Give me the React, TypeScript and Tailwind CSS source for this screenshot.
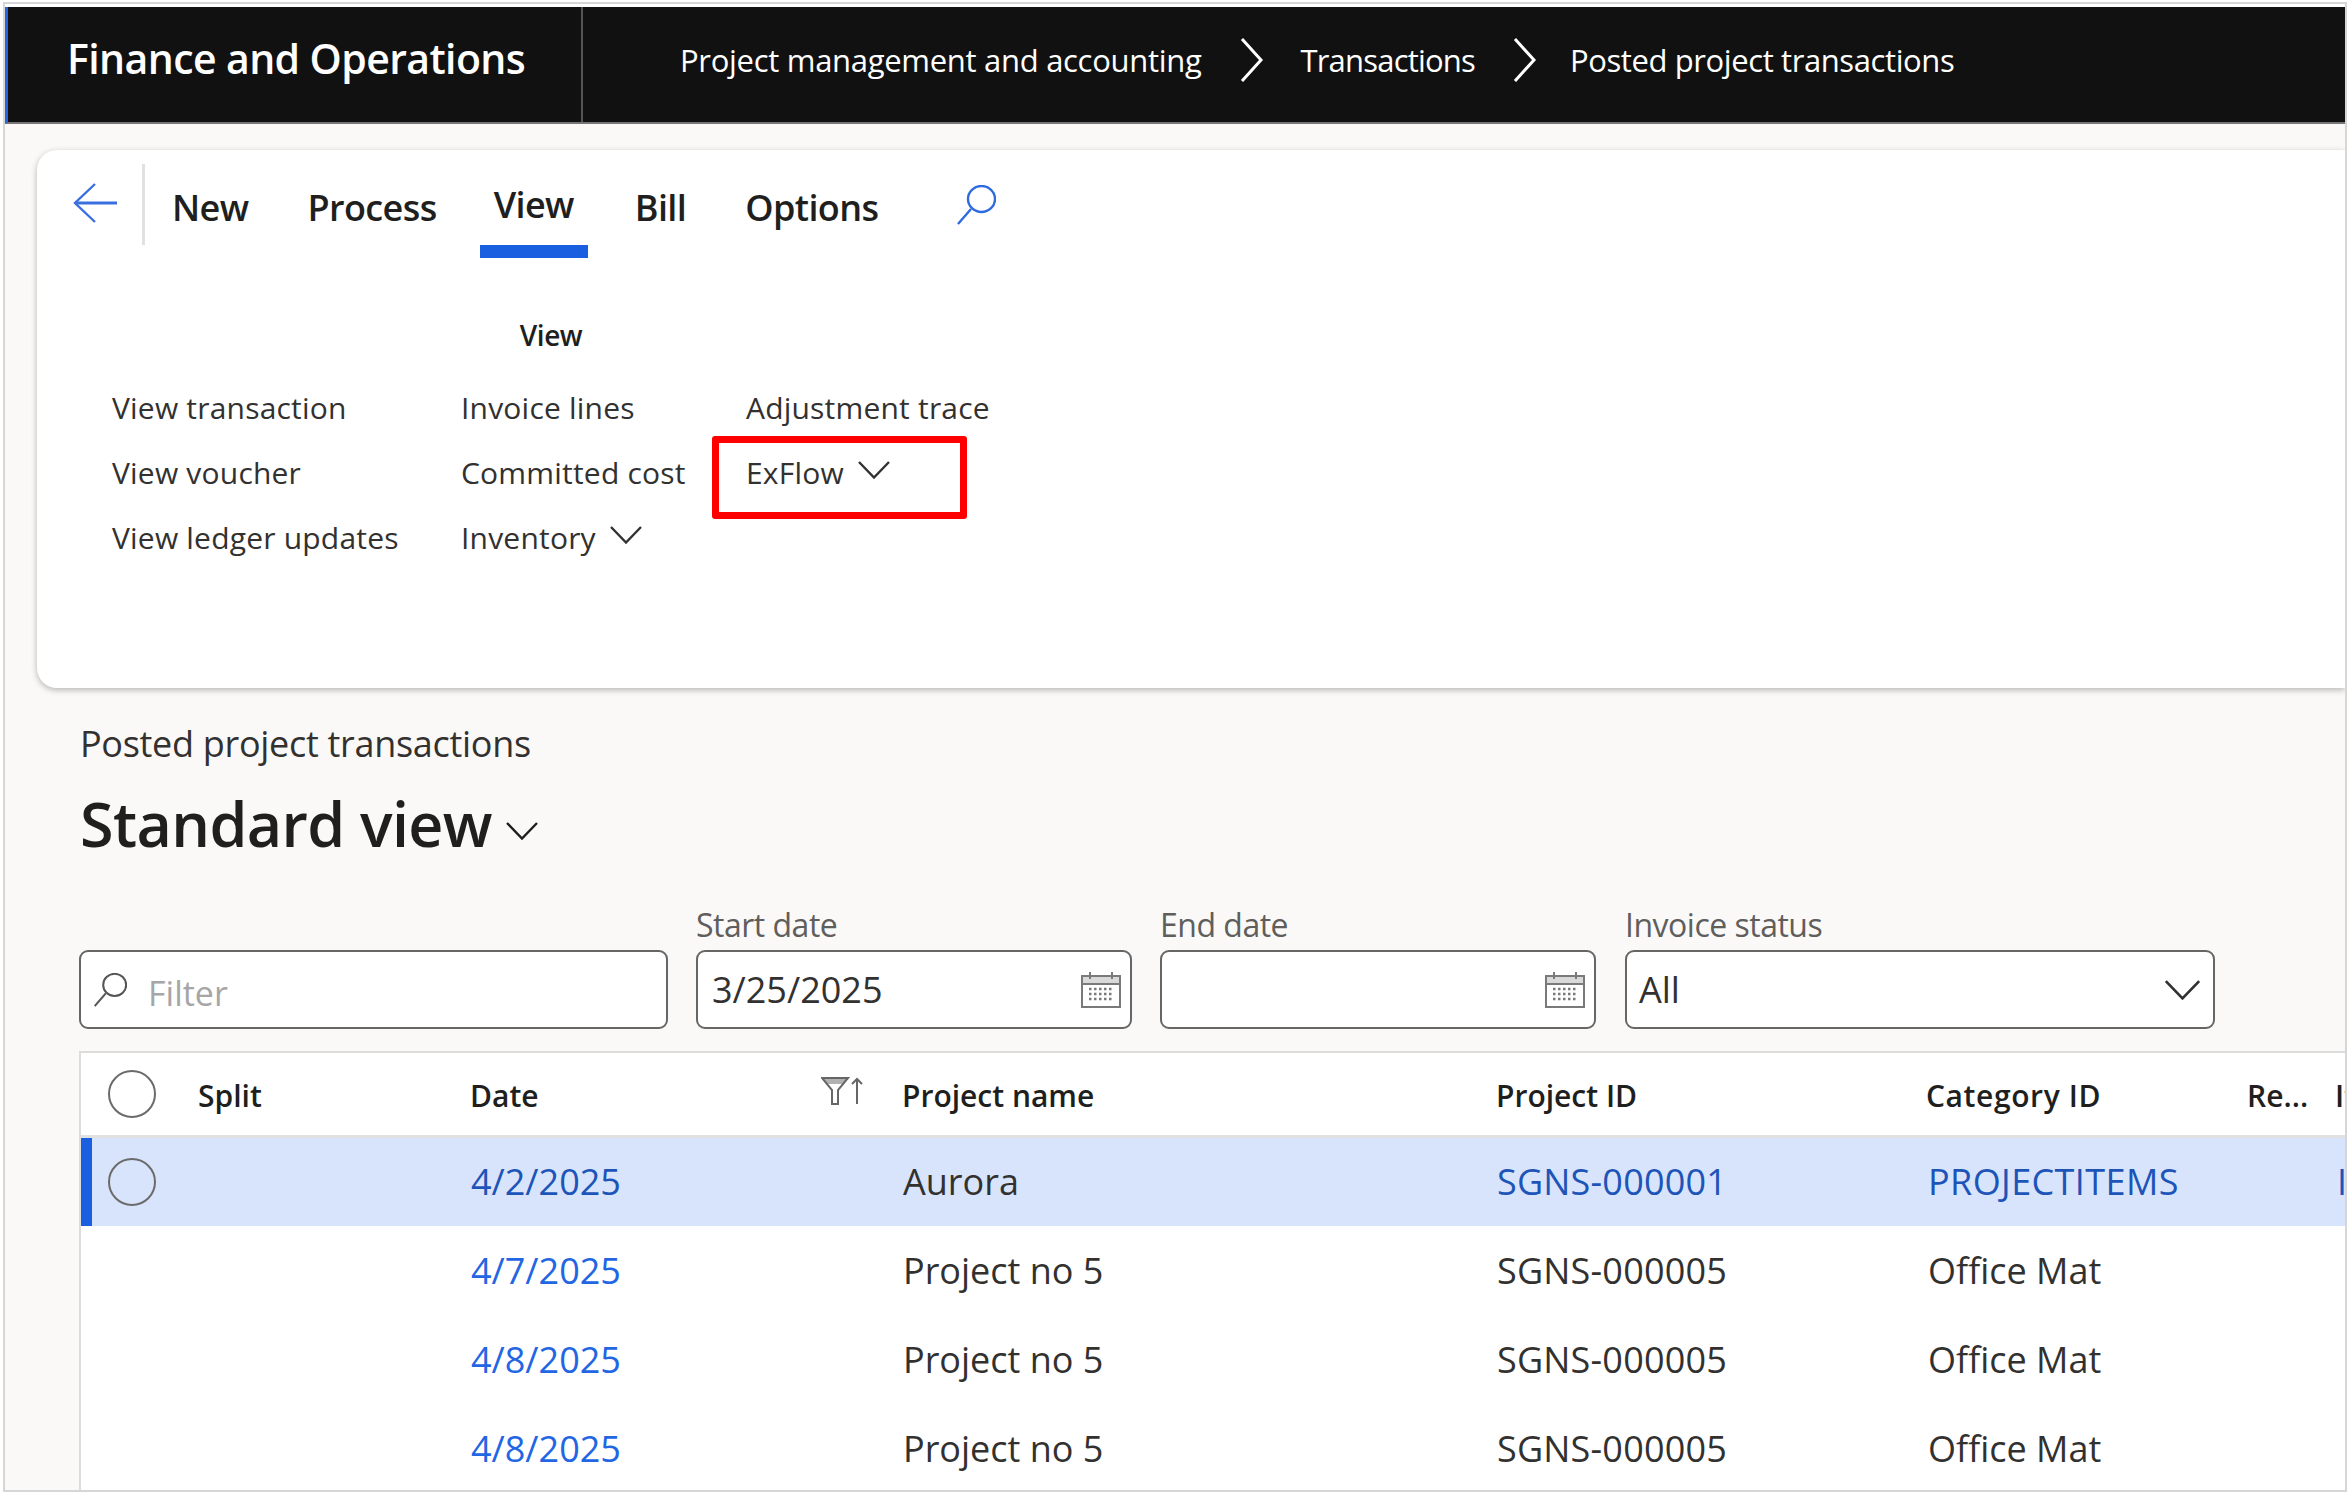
const V = ({ className }: { className: string }) => (
  <svg viewBox="0 0 32 18" className={className} fill="none" stroke="currentColor" strokeWidth="2.4">
    <path d="M1 1 L16 16.5 L31 1" />
  </svg>
)

const Crumb = () => (
  <svg viewBox="0 0 24 44" className="h-[44px] w-[24px] text-white" fill="none" stroke="currentColor" strokeWidth="3">
    <path d="M2 1 L21 22 L2 43" />
  </svg>
)

const SearchIcon = ({ className }: { className: string }) => (
  <svg viewBox="0 0 40 40" className={className} fill="none" stroke="currentColor" strokeWidth="2.4">
    <ellipse cx="25.5" cy="14" rx="13.5" ry="13" />
    <path d="M15 24 L2 39" />
  </svg>
)

const Calendar = () => (
  <svg viewBox="0 0 40 36" className="h-[36px] w-[40px] text-[#7a7a7a]" fill="none" stroke="currentColor" strokeWidth="2">
    <rect x="1" y="4" width="38" height="31" fill="#fff" />
    <rect x="1" y="4" width="38" height="8" fill="#d9d9d9" />
    <path d="M9 0 V7 M31 0 V7" />
    <path d="M8 17 H32 M8 22 H32 M8 27 H32" strokeWidth="2.5" strokeDasharray="2.5 2.5" />
  </svg>
)

const Circle = () => <div className="h-[48px] w-[48px] rounded-full border-2 border-[#6b6b6b]" />

const cols = "grid grid-cols-[117px_272px_432px_594px_430px_321px_88px_1fr] items-center"

const ribbon = [
  ["View transaction", "Invoice lines", "Adjustment trace"],
  ["View voucher", "Committed cost", "ExFlow"],
  ["View ledger updates", "Inventory", ""],
]

const rows = [
  { date: "4/7/2025", name: "Project no 5", id: "SGNS-000005", cat: "Office Mat" },
  { date: "4/8/2025", name: "Project no 5", id: "SGNS-000005", cat: "Office Mat" },
  { date: "4/8/2025", name: "Project no 5", id: "SGNS-000005", cat: "Office Mat" },
]

export default function App() {
  return (
    <div className="h-[1494px] w-[2349px] overflow-hidden bg-white pb-[2px] pl-[3px] pr-[2px] pt-[2px] font-['Open_Sans',sans-serif]">
      <div className="flex h-full flex-col overflow-hidden border-2 border-[#d6d6d6] bg-[#faf9f8]">
        <div className="h-[3px] shrink-0 bg-white" />

        {/* Top bar */}
        <div className="flex h-[117px] shrink-0 items-center border-b-2 border-l-[3px] border-b-[#777] border-l-[#2266e3] bg-[#111111] text-white">
          <div className="flex h-full w-[575px] shrink-0 items-center border-r-2 border-[#555] pb-[12px] pl-[59px] text-[41px] font-semibold tracking-[-0.6px]">
            Finance and Operations
          </div>
          <div className="flex items-center pb-[9px] pl-[97px] text-[31px] tracking-[-0.3px]">
            <span>Project management and accounting</span>
            <span className="ml-[39px] mr-[36px]"><Crumb /></span>
            <span className="tracking-[-0.8px]">Transactions</span>
            <span className="ml-[38px] mr-[33px]"><Crumb /></span>
            <span className="tracking-[-0.4px]">Posted project transactions</span>
          </div>
        </div>

        {/* Action pane */}
        <div className="ml-[32px] mt-[26px] h-[538px] shrink-0 rounded-l-[20px] bg-white pl-[36px] shadow-[0_2px_6px_rgba(0,0,0,0.28)]">
          <div className="flex h-[108px] items-start">
            <svg viewBox="0 0 44 40" className="mt-[33px] h-[40px] w-[44px] text-[#3a6fe0]" fill="none" stroke="currentColor" strokeWidth="2.4">
              <path d="M22 1 L2 20 L22 39" />
              <path d="M2 20 H44" strokeWidth="3" />
            </svg>
            <div className="ml-[25px] mt-[14px] h-[81px] w-[3px] bg-[#e1e1e1]" />
            <div className="ml-[13px] flex items-start gap-[31px] text-[36px] font-semibold leading-[46px] tracking-[-0.6px] text-[#201f1e]">
              <div className="px-[14px] pt-[35px]">New</div>
              <div className="px-[14px] pt-[35px]">Process</div>
              <div className="-ml-[2px] flex h-[108px] flex-col items-center border-b-[13px] border-[#1a5fe0] px-[14px] pt-[32px]">View</div>
              <div className="ml-[2px] px-[14px] pt-[35px]">Bill</div>
              <div className="px-[14px] pt-[35px]">Options</div>
            </div>
            <SearchIcon className="ml-[64px] mt-[35px] h-[40px] w-[40px] text-[#2f6be0]" />
          </div>

          <div className="ml-[39px] w-[878px]">
            <div className="mt-[59px] text-center text-[28px] font-semibold leading-[36px] tracking-[-0.4px] text-[#201f1e]">View</div>
            <div className="mt-[22px] grid grid-cols-[349px_285px_1fr] text-[30px] tracking-[0.2px] text-[#323130]">
              {ribbon.flat().map((label, i) => (
                <div key={i} className="relative flex h-[65px] items-center gap-[14px]">
                  {label}
                  {(label === "ExFlow" || label === "Inventory") && <V className="mb-[6px] h-[18px] w-[32px]" />}
                  {label === "ExFlow" && (
                    <div className="absolute left-[-34px] top-[-4px] h-[83px] w-[255px] rounded-[3px] border-[7px] border-[#ff0000]" />
                  )}
                </div>
              ))}
            </div>
          </div>
        </div>

        {/* Page title */}
        <div className="ml-[75px] mt-[36px] text-[36px] leading-[40px] tracking-[-0.3px] text-[#323130]">Posted project transactions</div>
        <div className="ml-[75px] mt-[25px] flex items-center gap-[14px] text-[61px] font-semibold leading-[70px] tracking-[-0.6px] text-[#201f1e]">
          Standard view
          <V className="mt-[14px] h-[20px] w-[32px]" />
        </div>

        {/* Filters */}
        <div className="ml-[74px] mt-[46px] flex items-end text-[#323130]">
          <div className="flex h-[79px] w-[589px] items-center gap-[21px] rounded-[9px] border-2 border-[#666] bg-white pl-[12px]">
            <SearchIcon className="h-[34px] w-[34px] text-[#555]" />
            <span className="mt-[8px] text-[34px] text-[#a6a6a6]">Filter</span>
          </div>
          <div className="ml-[28px] w-[436px]">
            <div className="mb-[5px] text-[32px] leading-[40px] tracking-[-0.5px] text-[#605e5c]">Start date</div>
            <div className="flex h-[79px] items-center justify-between rounded-[9px] border-2 border-[#666] bg-white pl-[14px] pr-[9px] text-[36px]">
              3/25/2025
              <Calendar />
            </div>
          </div>
          <div className="ml-[28px] w-[436px]">
            <div className="mb-[5px] text-[32px] leading-[40px] tracking-[-0.5px] text-[#605e5c]">End date</div>
            <div className="flex h-[79px] items-center justify-end rounded-[9px] border-2 border-[#666] bg-white pr-[9px]">
              <Calendar />
            </div>
          </div>
          <div className="ml-[29px] w-[590px]">
            <div className="mb-[5px] text-[32px] leading-[40px] tracking-[-0.5px] text-[#605e5c]">Invoice status</div>
            <div className="flex h-[79px] items-center justify-between rounded-[9px] border-2 border-[#666] bg-white pl-[12px] pr-[12px] text-[36px]">
              All
              <V className="h-[20px] w-[37px]" />
            </div>
          </div>
        </div>

        {/* Grid */}
        <div className="ml-[74px] mt-[22px] flex-1 border-l-2 border-t-2 border-[#dcdcdc] bg-white">
          <div className={`${cols} h-[85px] border-b-[3px] border-[#e1e1e1] text-[30px] font-semibold text-[#201f1e]`}>
            <div className="pl-[27px]"><Circle /></div>
            <div className="mt-[3px]">Split</div>
            <div className="flex items-center">
              <span className="mt-[3px]">Date</span>
              <svg viewBox="0 0 42 28" className="mb-[6px] ml-[282px] h-[28px] w-[42px] text-[#666]" fill="none" stroke="currentColor" strokeWidth="2">
                <path d="M1 1 H27 L17 13 V27 H11 V13 Z" />
                <path d="M2 1 H26 L22 6 H6 Z" fill="currentColor" opacity="0.5" />
                <path d="M36 27 V2 M31 7 L36 2 L41 7" />
              </svg>
            </div>
            <div className="mt-[3px]">Project name</div>
            <div className="mt-[3px]">Project ID</div>
            <div className="mt-[3px] tracking-[0.6px]">Category ID</div>
            <div className="mt-[3px]">Re...</div>
            <div className="mt-[3px]">It</div>
          </div>

          <div className={`${cols} h-[88px] bg-[#d8e4fb] text-[36px] text-[#323130] shadow-[inset_11px_0_0_#1a5fe0]`}>
            <div className="pl-[27px]"><Circle /></div>
            <div />
            <div className="pl-[1px] text-[#1d54b8]">4/2/2025</div>
            <div className="pl-[1px]">Aurora</div>
            <div className="pl-[1px] tracking-[0.2px] text-[#1d54b8]">SGNS-000001</div>
            <div className="pl-[2px] tracking-[0.4px] text-[#1d54b8]">PROJECTITEMS</div>
            <div />
            <div className="pl-[2px] text-[#1d54b8]">I</div>
          </div>

          {rows.map((row, i) => (
            <div key={i} className={`${cols} h-[89px] text-[36px] text-[#323130]`}>
              <div />
              <div />
              <div className="pl-[1px] text-[#2266e3]">{row.date}</div>
              <div className="pl-[1px]">{row.name}</div>
              <div className="pl-[1px] tracking-[0.2px]">{row.id}</div>
              <div className="pl-[2px]">{row.cat}</div>
            </div>
          ))}
        </div>
      </div>
    </div>
  )
}
